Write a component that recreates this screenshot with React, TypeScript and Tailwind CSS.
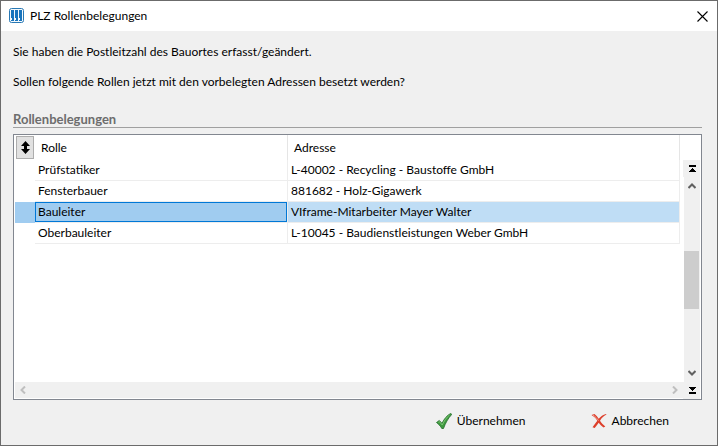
import type { ReactNode } from "react";

type Entry = { role: string; address: string };

const entries: Entry[] = [
  { role: "Prüfstatiker", address: "L-40002 - Recycling - Baustoffe GmbH" },
  { role: "Fensterbauer", address: "881682 - Holz-Gigawerk" },
  { role: "Bauleiter", address: "VIframe-Mitarbeiter Mayer Walter" },
  { role: "Oberbauleiter", address: "L-10045 - Baudienstleistungen Weber GmbH" },
];

const selectedRole = "Bauleiter";

function AppIcon() {
  return (
    <svg className="size-4" viewBox="0 0 16 16" aria-hidden="true">
      <rect x="0.5" y="0.5" width="14" height="14" rx="2" fill="#f4f9fc" stroke="#2878b4" />
      <path d="M2 2h3v8H2zM6 2h3v8H6zM10 2h3v8h-3z" fill="#1874bd" />
      <path d="M3 10h2v3H3zM7 10h2v3H7zM11 10h2v3h-2z" fill="#1874bd" />
      <path d="M2 12h1v1H2zM6 12h1v1H6zM10 12h1v1h-1z" fill="#1874bd" />
    </svg>
  );
}

function SortIcon() {
  return (
    <svg className="h-[13px] w-[9px]" viewBox="0 0 9 13" aria-hidden="true">
      <path d="M4.5 0L9 5H6v3h3l-4.500 5L0 8h3V5H0z" fill="#000" />
    </svg>
  );
}

function CheckIcon() {
  return (
    <svg className="size-4" viewBox="0 0 16 16" aria-hidden="true">
      <path
        d="M0.500 9.500L3.300 7.500L6 10.300C8 6 11 2.500 14.500 0.500L15.800 1.300C12 5.500 9.500 10 7.500 15.500L5.800 15.500C4.500 13 2.500 11 0.500 9.500Z"
        fill="#3f9a3f"
        stroke="#1f6b27"
        strokeWidth="0.800"
      />
      <path d="M2.500 9.300L3.500 8.700L6.200 12C8 8 10.500 4.500 13.500 2" fill="none" stroke="#7cc576" strokeWidth="1" />
    </svg>
  );
}

function CrossIcon() {
  return (
    <svg className="size-4" viewBox="0 0 16 16" aria-hidden="true">
      <path
        d="M0.500 2L3.500 1C5.500 2.500 6.500 4 7.700 5.800C9.700 3.500 12 1.800 15 1L15.500 1.500C12.500 3 10.500 5 9 7.700C10.500 10 12.500 12 14.300 13.500L12.500 14.500C10.500 13 9 11.500 7.700 9.800C6.300 11.800 5 13.500 3.700 15L1.500 14.200C3 12 4.700 9.800 6.300 7.700C5 5.500 3 3.500 0.500 2Z"
        fill="#dd3f2b"
      />
      <path d="M2 2.200C4.500 3.500 6 5.500 7.500 7.700" fill="none" stroke="#f29a8c" />
    </svg>
  );
}

function Chevron({ d, label, tone }: { d: string; label: string; tone: string }) {
  return (
    <button type="button" aria-label={label} className={`flex size-4 shrink-0 items-center justify-center ${tone}`}>
      <svg className="size-2" viewBox="0 0 8 8" aria-hidden="true">
        <path d={d} fill="none" stroke="currentColor" strokeWidth="2" />
      </svg>
    </button>
  );
}

function EdgeButton({ label, children }: { label: string; children: ReactNode }) {
  return (
    <button type="button" aria-label={label} className="flex h-[17px] w-[17px] shrink-0 items-center justify-center bg-[#f0f0f0] pl-px">
      <svg className="h-[7px] w-[7px]" viewBox="0 0 7 7" fill="#000" aria-hidden="true">
        {children}
      </svg>
    </button>
  );
}

function RoleTable() {
  return (
    <table className="w-full table-fixed border-separate border-spacing-0 text-left">
      <colgroup>
        <col className="w-5" />
        <col className="w-[253px]" />
        <col />
      </colgroup>
      <thead>
        <tr className="h-[25px]">
          <th className="p-0">
            <button
              type="button"
              aria-label="Sortieren"
              className="ml-px flex h-[23px] w-[18px] items-center justify-center border border-[#adadad] bg-[#e1e1e1]"
            >
              <SortIcon />
            </button>
          </th>
          <th className="border-r border-[#e5e5e5] py-0 pl-1.5 font-normal">Rolle</th>
          <th className="border-r border-[#e5e5e5] py-0 pl-1.5 font-normal">Adresse</th>
        </tr>
      </thead>
      <tbody>
        {entries.map(({ role, address }) => {
          const selected = role === selectedRole;
          return (
            <tr key={role} aria-selected={selected} className="h-[21px]">
              <td className={selected ? "bg-[#a0ccf0] p-0" : "p-0"} />
              <td className="border-r border-b border-[#ededed] p-0">
                <div
                  className={
                    selected
                      ? "flex h-5 items-center border border-[#0078d7] bg-[#a0ccf0] pl-0.5"
                      : "flex h-5 items-center pl-[3px]"
                  }
                >
                  {role}
                </div>
              </td>
              <td className="border-r border-b border-[#ededed] p-0">
                <div className={selected ? "flex h-5 items-center bg-[#bfddf5] pl-[3px]" : "flex h-5 items-center pl-[3px]"}>
                  {address}
                </div>
              </td>
            </tr>
          );
        })}
      </tbody>
    </table>
  );
}

export default function App() {
  return (
    <main className="flex h-screen flex-col border border-[#6b6b6b] bg-[#f0f0f0] font-['Lato','Open_Sans',sans-serif] text-xs text-black">
      <header className="flex h-[30px] shrink-0 items-center bg-white pr-[7px] pl-2">
        <AppIcon />
        <h1 className="ml-[5px] flex-1">PLZ Rollenbelegungen</h1>
        <button type="button" aria-label="Schließen" className="flex size-4 items-center justify-center">
          <svg className="h-[11px] w-[11px]" viewBox="0 0 11 11" aria-hidden="true">
            <path d="M0.500 0.500l10 10M10.500 0.500l-10 10" stroke="#000" strokeWidth="1.100" />
          </svg>
        </button>
      </header>

      <section className="flex min-h-0 flex-1 flex-col px-3 pt-[13px]">
        <div className="flex flex-col gap-3.5 leading-4">
          <p>Sie haben die Postleitzahl des Bauortes erfasst/geändert.</p>
          <p>Sollen folgende Rollen jetzt mit den vorbelegten Adressen besetzt werden?</p>
        </div>

        <h2 className="mt-[21px] mr-[3px] border-b border-[#a0a0a0] text-[13px] leading-4 font-bold text-[#6d6d6d]">Rollenbelegungen</h2>

        <div className="mt-1.5 mr-[3px] flex min-h-0 flex-1 flex-col border border-[#828790] bg-white p-px pt-0">
          <div className="flex min-h-0 flex-1">
            <div className="min-w-0 flex-1 pr-[3px]">
              <RoleTable />
            </div>
            <div className="flex w-[17px] flex-col pt-[25px]">
              <EdgeButton label="Zum Anfang">
                <path d="M0 0h7v2H0zM3 3h1v1h1v1h1v1h1v1H0V6h1V5h1V4h1z" />
              </EdgeButton>
              <div className="ml-px flex flex-1 flex-col bg-[#f0f0f0]">
                <Chevron label="Nach oben" tone="text-[#606060]" d="M0.500 7L4 3.500L7.500 7" />
                <div className="flex-[58_1_0%]" />
                <div className="mr-px flex-[57_1_0%] bg-[#cdcdcd]" />
                <div className="flex-[57_1_0%]" />
                <Chevron label="Nach unten" tone="text-[#606060]" d="M0.500 1L4 4.500L7.500 1" />
              </div>
            </div>
          </div>
          <div className="flex h-4 items-center justify-between bg-[#f0f0f0]">
            <Chevron label="Nach links" tone="text-[#bfbfbf]" d="M6 0.500L2.500 4L6 7.500" />
            <div className="flex items-center">
              <Chevron label="Nach rechts" tone="text-[#bfbfbf]" d="M2 0.500L5.500 4L2 7.500" />
              <EdgeButton label="Zum Ende">
                <path d="M0 5h7v2H0zM0 0h7v1H6v1H5v1H4v1H3V3H2V2H1V1H0z" />
              </EdgeButton>
            </div>
          </div>
        </div>
      </section>

      <footer className="flex h-[45px] shrink-0 items-center justify-end gap-[65px] pr-12 pb-1">
        <button type="button" className="flex items-center gap-[5px]">
          <CheckIcon />
          Übernehmen
        </button>
        <button type="button" className="flex items-center gap-[5px]">
          <CrossIcon />
          Abbrechen
        </button>
      </footer>
    </main>
  );
}
